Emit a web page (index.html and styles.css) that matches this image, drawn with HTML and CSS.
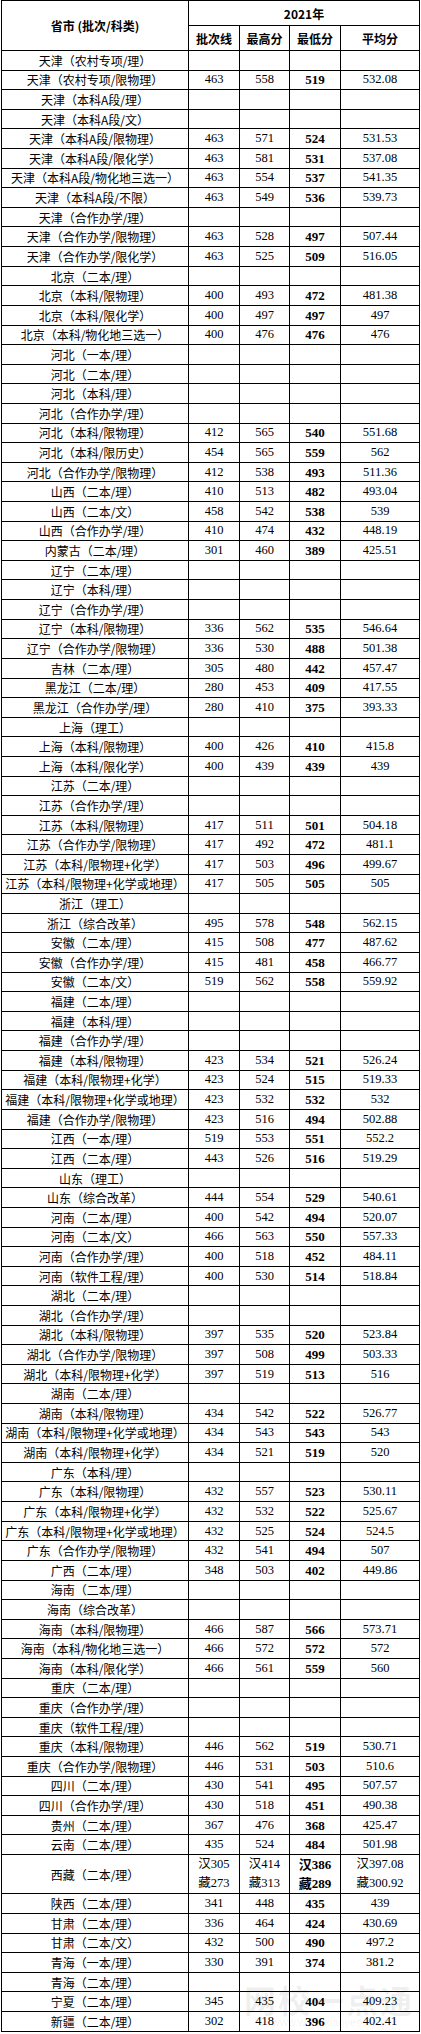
FILE: index.html
```html
<!DOCTYPE html>
<html lang="zh-CN">
<head>
<meta charset="utf-8">
<title>2021年各省录取分数</title>
<link rel="stylesheet" href="styles.css">
</head>
<body>
<div class="page">
<table class="scores">
<colgroup>
<col class="c-name"><col class="c-num"><col class="c-num2"><col class="c-num"><col class="c-avg">
</colgroup>
<thead>
<tr class="h1"><th rowspan="2">省市 (批次/科类)</th><th colspan="4">2021年</th></tr>
<tr class="h2"><th>批次线</th><th>最高分</th><th>最低分</th><th>平均分</th></tr>
</thead>
<tbody>
<tr><td class="p">天津（农村专项/理）</td><td></td><td></td><td></td><td></td></tr>
<tr><td class="p">天津（农村专项/限物理）</td><td class="n">463</td><td class="n">558</td><td class="b">519</td><td class="n">532.08</td></tr>
<tr><td class="p">天津（本科A段/理）</td><td></td><td></td><td></td><td></td></tr>
<tr><td class="p">天津（本科A段/文）</td><td></td><td></td><td></td><td></td></tr>
<tr><td class="p">天津（本科A段/限物理）</td><td class="n">463</td><td class="n">571</td><td class="b">524</td><td class="n">531.53</td></tr>
<tr><td class="p">天津（本科A段/限化学）</td><td class="n">463</td><td class="n">581</td><td class="b">531</td><td class="n">537.08</td></tr>
<tr><td class="p">天津（本科A段/物化地三选一）</td><td class="n">463</td><td class="n">554</td><td class="b">537</td><td class="n">541.35</td></tr>
<tr><td class="p">天津（本科A段/不限）</td><td class="n">463</td><td class="n">549</td><td class="b">536</td><td class="n">539.73</td></tr>
<tr><td class="p">天津（合作办学/理）</td><td></td><td></td><td></td><td></td></tr>
<tr><td class="p">天津（合作办学/限物理）</td><td class="n">463</td><td class="n">528</td><td class="b">497</td><td class="n">507.44</td></tr>
<tr><td class="p">天津（合作办学/限化学）</td><td class="n">463</td><td class="n">525</td><td class="b">509</td><td class="n">516.05</td></tr>
<tr><td class="p">北京（二本/理）</td><td></td><td></td><td></td><td></td></tr>
<tr><td class="p">北京（本科/限物理）</td><td class="n">400</td><td class="n">493</td><td class="b">472</td><td class="n">481.38</td></tr>
<tr><td class="p">北京（本科/限化学）</td><td class="n">400</td><td class="n">497</td><td class="b">497</td><td class="n">497</td></tr>
<tr><td class="p">北京（本科/物化地三选一）</td><td class="n">400</td><td class="n">476</td><td class="b">476</td><td class="n">476</td></tr>
<tr><td class="p">河北（一本/理）</td><td></td><td></td><td></td><td></td></tr>
<tr><td class="p">河北（二本/理）</td><td></td><td></td><td></td><td></td></tr>
<tr><td class="p">河北（本科/理）</td><td></td><td></td><td></td><td></td></tr>
<tr><td class="p">河北（合作办学/理）</td><td></td><td></td><td></td><td></td></tr>
<tr><td class="p">河北（本科/限物理）</td><td class="n">412</td><td class="n">565</td><td class="b">540</td><td class="n">551.68</td></tr>
<tr><td class="p">河北（本科/限历史）</td><td class="n">454</td><td class="n">565</td><td class="b">559</td><td class="n">562</td></tr>
<tr><td class="p">河北（合作办学/限物理）</td><td class="n">412</td><td class="n">538</td><td class="b">493</td><td class="n">511.36</td></tr>
<tr><td class="p">山西（二本/理）</td><td class="n">410</td><td class="n">513</td><td class="b">482</td><td class="n">493.04</td></tr>
<tr><td class="p">山西（二本/文）</td><td class="n">458</td><td class="n">542</td><td class="b">538</td><td class="n">539</td></tr>
<tr><td class="p">山西（合作办学/理）</td><td class="n">410</td><td class="n">474</td><td class="b">432</td><td class="n">448.19</td></tr>
<tr><td class="p">内蒙古（二本/理）</td><td class="n">301</td><td class="n">460</td><td class="b">389</td><td class="n">425.51</td></tr>
<tr><td class="p">辽宁（二本/理）</td><td></td><td></td><td></td><td></td></tr>
<tr><td class="p">辽宁（本科/理）</td><td></td><td></td><td></td><td></td></tr>
<tr><td class="p">辽宁（合作办学/理）</td><td></td><td></td><td></td><td></td></tr>
<tr><td class="p">辽宁（本科/限物理）</td><td class="n">336</td><td class="n">562</td><td class="b">535</td><td class="n">546.64</td></tr>
<tr><td class="p">辽宁（合作办学/限物理）</td><td class="n">336</td><td class="n">530</td><td class="b">488</td><td class="n">501.38</td></tr>
<tr><td class="p">吉林（二本/理）</td><td class="n">305</td><td class="n">480</td><td class="b">442</td><td class="n">457.47</td></tr>
<tr><td class="p">黑龙江（二本/理）</td><td class="n">280</td><td class="n">453</td><td class="b">409</td><td class="n">417.55</td></tr>
<tr><td class="p">黑龙江（合作办学/理）</td><td class="n">280</td><td class="n">410</td><td class="b">375</td><td class="n">393.33</td></tr>
<tr><td class="p">上海（理工）</td><td></td><td></td><td></td><td></td></tr>
<tr><td class="p">上海（本科/限物理）</td><td class="n">400</td><td class="n">426</td><td class="b">410</td><td class="n">415.8</td></tr>
<tr><td class="p">上海（本科/限化学）</td><td class="n">400</td><td class="n">439</td><td class="b">439</td><td class="n">439</td></tr>
<tr><td class="p">江苏（二本/理）</td><td></td><td></td><td></td><td></td></tr>
<tr><td class="p">江苏（合作办学/理）</td><td></td><td></td><td></td><td></td></tr>
<tr><td class="p">江苏（本科/限物理）</td><td class="n">417</td><td class="n">511</td><td class="b">501</td><td class="n">504.18</td></tr>
<tr><td class="p">江苏（合作办学/限物理）</td><td class="n">417</td><td class="n">492</td><td class="b">472</td><td class="n">481.1</td></tr>
<tr><td class="p">江苏（本科/限物理+化学）</td><td class="n">417</td><td class="n">503</td><td class="b">496</td><td class="n">499.67</td></tr>
<tr><td class="p">江苏（本科/限物理+化学或地理）</td><td class="n">417</td><td class="n">505</td><td class="b">505</td><td class="n">505</td></tr>
<tr><td class="p">浙江（理工）</td><td></td><td></td><td></td><td></td></tr>
<tr><td class="p">浙江（综合改革）</td><td class="n">495</td><td class="n">578</td><td class="b">548</td><td class="n">562.15</td></tr>
<tr><td class="p">安徽（二本/理）</td><td class="n">415</td><td class="n">508</td><td class="b">477</td><td class="n">487.62</td></tr>
<tr><td class="p">安徽（合作办学/理）</td><td class="n">415</td><td class="n">481</td><td class="b">458</td><td class="n">466.77</td></tr>
<tr><td class="p">安徽（二本/文）</td><td class="n">519</td><td class="n">562</td><td class="b">558</td><td class="n">559.92</td></tr>
<tr><td class="p">福建（二本/理）</td><td></td><td></td><td></td><td></td></tr>
<tr><td class="p">福建（本科/理）</td><td></td><td></td><td></td><td></td></tr>
<tr><td class="p">福建（合作办学/理）</td><td></td><td></td><td></td><td></td></tr>
<tr><td class="p">福建（本科/限物理）</td><td class="n">423</td><td class="n">534</td><td class="b">521</td><td class="n">526.24</td></tr>
<tr><td class="p">福建（本科/限物理+化学）</td><td class="n">423</td><td class="n">524</td><td class="b">515</td><td class="n">519.33</td></tr>
<tr><td class="p">福建（本科/限物理+化学或地理）</td><td class="n">423</td><td class="n">532</td><td class="b">532</td><td class="n">532</td></tr>
<tr><td class="p">福建（合作办学/限物理）</td><td class="n">423</td><td class="n">516</td><td class="b">494</td><td class="n">502.88</td></tr>
<tr><td class="p">江西（一本/理）</td><td class="n">519</td><td class="n">553</td><td class="b">551</td><td class="n">552.2</td></tr>
<tr><td class="p">江西（二本/理）</td><td class="n">443</td><td class="n">526</td><td class="b">516</td><td class="n">519.29</td></tr>
<tr><td class="p">山东（理工）</td><td></td><td></td><td></td><td></td></tr>
<tr><td class="p">山东（综合改革）</td><td class="n">444</td><td class="n">554</td><td class="b">529</td><td class="n">540.61</td></tr>
<tr><td class="p">河南（二本/理）</td><td class="n">400</td><td class="n">542</td><td class="b">494</td><td class="n">520.07</td></tr>
<tr><td class="p">河南（二本/文）</td><td class="n">466</td><td class="n">563</td><td class="b">550</td><td class="n">557.33</td></tr>
<tr><td class="p">河南（合作办学/理）</td><td class="n">400</td><td class="n">518</td><td class="b">452</td><td class="n">484.11</td></tr>
<tr><td class="p">河南（软件工程/理）</td><td class="n">400</td><td class="n">530</td><td class="b">514</td><td class="n">518.84</td></tr>
<tr><td class="p">湖北（二本/理）</td><td></td><td></td><td></td><td></td></tr>
<tr><td class="p">湖北（合作办学/理）</td><td></td><td></td><td></td><td></td></tr>
<tr><td class="p">湖北（本科/限物理）</td><td class="n">397</td><td class="n">535</td><td class="b">520</td><td class="n">523.84</td></tr>
<tr><td class="p">湖北（合作办学/限物理）</td><td class="n">397</td><td class="n">508</td><td class="b">499</td><td class="n">503.33</td></tr>
<tr><td class="p">湖北（本科/限物理+化学）</td><td class="n">397</td><td class="n">519</td><td class="b">513</td><td class="n">516</td></tr>
<tr><td class="p">湖南（二本/理）</td><td></td><td></td><td></td><td></td></tr>
<tr><td class="p">湖南（本科/限物理）</td><td class="n">434</td><td class="n">542</td><td class="b">522</td><td class="n">526.77</td></tr>
<tr><td class="p">湖南（本科/限物理+化学或地理）</td><td class="n">434</td><td class="n">543</td><td class="b">543</td><td class="n">543</td></tr>
<tr><td class="p">湖南（本科/限物理+化学）</td><td class="n">434</td><td class="n">521</td><td class="b">519</td><td class="n">520</td></tr>
<tr><td class="p">广东（本科/理）</td><td></td><td></td><td></td><td></td></tr>
<tr><td class="p">广东（本科/限物理）</td><td class="n">432</td><td class="n">557</td><td class="b">523</td><td class="n">530.11</td></tr>
<tr><td class="p">广东（本科/限物理+化学）</td><td class="n">432</td><td class="n">532</td><td class="b">522</td><td class="n">525.67</td></tr>
<tr><td class="p">广东（本科/限物理+化学或地理）</td><td class="n">432</td><td class="n">525</td><td class="b">524</td><td class="n">524.5</td></tr>
<tr><td class="p">广东（合作办学/限物理）</td><td class="n">432</td><td class="n">541</td><td class="b">494</td><td class="n">507</td></tr>
<tr><td class="p">广西（二本/理）</td><td class="n">348</td><td class="n">503</td><td class="b">402</td><td class="n">449.86</td></tr>
<tr><td class="p">海南（二本/理）</td><td></td><td></td><td></td><td></td></tr>
<tr><td class="p">海南（综合改革）</td><td></td><td></td><td></td><td></td></tr>
<tr><td class="p">海南（本科/限物理）</td><td class="n">466</td><td class="n">587</td><td class="b">566</td><td class="n">573.71</td></tr>
<tr><td class="p">海南（本科/物化地三选一）</td><td class="n">466</td><td class="n">572</td><td class="b">572</td><td class="n">572</td></tr>
<tr><td class="p">海南（本科/限化学）</td><td class="n">466</td><td class="n">561</td><td class="b">559</td><td class="n">560</td></tr>
<tr><td class="p">重庆（二本/理）</td><td></td><td></td><td></td><td></td></tr>
<tr><td class="p">重庆（合作办学/理）</td><td></td><td></td><td></td><td></td></tr>
<tr><td class="p">重庆（软件工程/理）</td><td></td><td></td><td></td><td></td></tr>
<tr><td class="p">重庆（本科/限物理）</td><td class="n">446</td><td class="n">562</td><td class="b">519</td><td class="n">530.71</td></tr>
<tr><td class="p">重庆（合作办学/限物理）</td><td class="n">446</td><td class="n">531</td><td class="b">503</td><td class="n">510.6</td></tr>
<tr><td class="p">四川（二本/理）</td><td class="n">430</td><td class="n">541</td><td class="b">495</td><td class="n">507.57</td></tr>
<tr><td class="p">四川（合作办学/理）</td><td class="n">430</td><td class="n">518</td><td class="b">451</td><td class="n">490.38</td></tr>
<tr><td class="p">贵州（二本/理）</td><td class="n">367</td><td class="n">476</td><td class="b">368</td><td class="n">425.47</td></tr>
<tr><td class="p">云南（二本/理）</td><td class="n">435</td><td class="n">524</td><td class="b">484</td><td class="n">501.98</td></tr>
<tr class="tall"><td class="p">西藏（二本/理）</td><td class="n"><span class="ln">汉305</span><span class="ln">藏273</span></td><td class="n"><span class="ln">汉414</span><span class="ln">藏313</span></td><td class="b"><span class="ln">汉386</span><span class="ln">藏289</span></td><td class="n"><span class="ln">汉397.08</span><span class="ln">藏300.92</span></td></tr>
<tr><td class="p">陕西（二本/理）</td><td class="n">341</td><td class="n">448</td><td class="b">435</td><td class="n">439</td></tr>
<tr><td class="p">甘肃（二本/理）</td><td class="n">336</td><td class="n">464</td><td class="b">424</td><td class="n">430.69</td></tr>
<tr><td class="p">甘肃（二本/文）</td><td class="n">432</td><td class="n">500</td><td class="b">490</td><td class="n">497.2</td></tr>
<tr><td class="p">青海（一本/理）</td><td class="n">330</td><td class="n">391</td><td class="b">374</td><td class="n">381.2</td></tr>
<tr><td class="p">青海（二本/理）</td><td></td><td></td><td></td><td></td></tr>
<tr><td class="p">宁夏（二本/理）</td><td class="n">345</td><td class="n">435</td><td class="b">404</td><td class="n">409.23</td></tr>
<tr><td class="p">新疆（二本/理）</td><td class="n">302</td><td class="n">418</td><td class="b">396</td><td class="n">402.41</td></tr>
</tbody>
</table>
<div class="watermark"><span class="wm-big">网校一点通</span><span class="wm-small">www.wangxiaoyeo.com</span></div>
</div>
</body>
</html>
```
FILE: styles.css
```css
html, body {
  margin: 0;
  padding: 0;
  background: #fff;
}
.page {
  position: relative;
  width: 421px;
}
.scores {
  border-collapse: collapse;
  table-layout: fixed;
  width: 418px;
  margin-left: 1px;
  color: #000;
  font-family: "Noto Sans CJK SC", sans-serif;
  font-size: 12px;
}
.c-name { width: 187px; }
.c-num { width: 51px; }
.c-num2 { width: 50px; }
.c-avg { width: 79px; }
.scores th, .scores td {
  border: 1px solid #000;
  padding: 0;
  text-align: center;
  vertical-align: middle;
  line-height: 15px;
  white-space: nowrap;
  overflow: hidden;
}
.scores th {
  font-weight: bold;
  font-size: 12px;
}
.h1, .h2 { height: 25px; }
.scores tbody tr { height: 19.62px; }
.scores tbody tr.tall { height: 39.24px; }
.p {
  font-family: "Noto Sans CJK SC", sans-serif;
  font-size: 12px;
}
.n {
  font-family: "Liberation Serif", "Noto Sans CJK SC", serif;
  font-size: 12.5px;
}
.b {
  font-family: "Liberation Serif", "Noto Sans CJK SC", serif;
  font-size: 13px;
  font-weight: bold;
}
.ln {
  display: block;
  height: 19px;
  line-height: 19px;
}
.watermark {
  position: absolute;
  left: 244px;
  top: 1982px;
  width: 170px;
  text-align: center;
  color: rgba(0, 0, 0, 0.07);
  pointer-events: none;
}
.wm-big {
  display: block;
  font-family: "Noto Sans CJK SC", sans-serif;
  font-weight: bold;
  font-size: 32px;
  line-height: 34px;
  letter-spacing: 2px;
}
.wm-small {
  display: block;
  font-family: "Liberation Sans", sans-serif;
  font-size: 11px;
  line-height: 12px;
}
```
